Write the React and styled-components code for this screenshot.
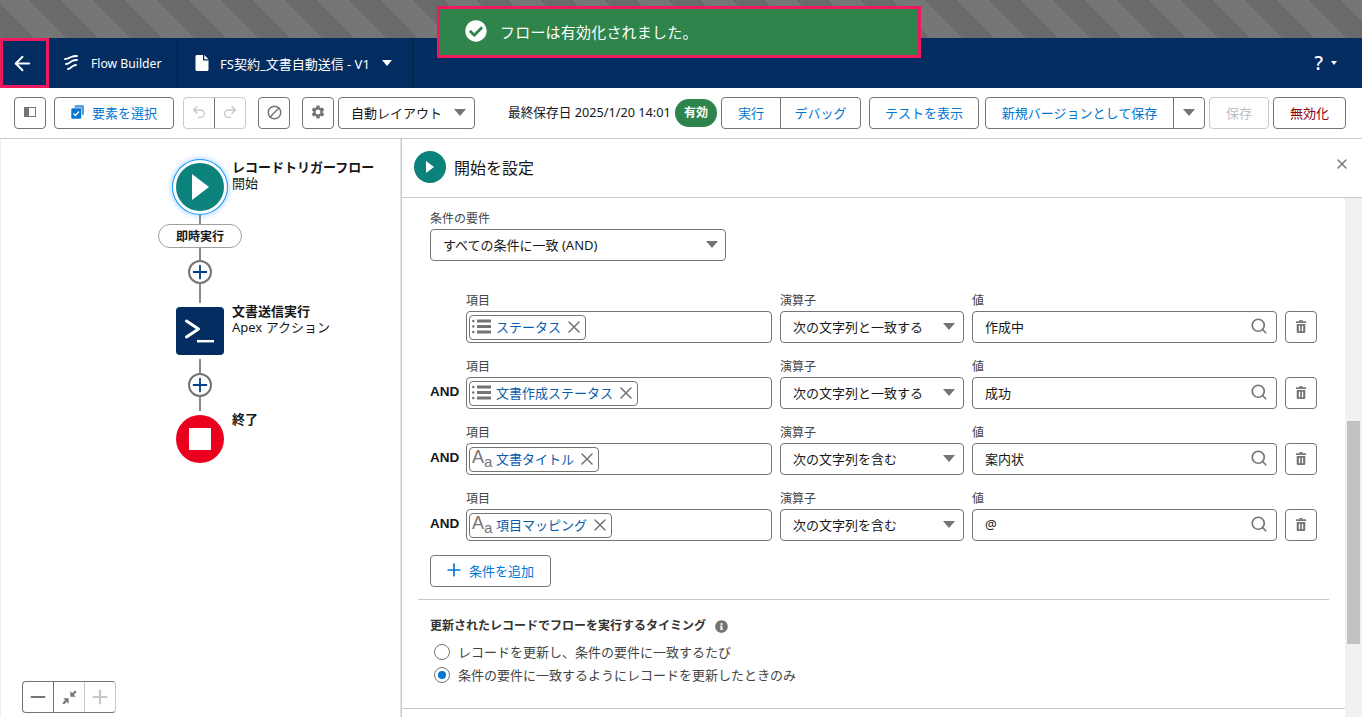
import styled, { createGlobalStyle } from "styled-components";
import { ArrowLeft, Ban, Minus, Plus, Redo2, Search, Undo2, X } from "lucide-react";
import { FaCheckCircle, FaInfoCircle } from "react-icons/fa";
import { MdSettings } from "react-icons/md";

const GlobalStyle = createGlobalStyle`
  html, body {
    margin: 0;
    height: 100%;
    overflow: hidden;
    background: #ffffff;
    font-family: "Noto Sans", "Noto Sans CJK JP", sans-serif;
    font-size: 13px;
    color: #181818;
  }
  * { box-sizing: border-box; }
`;

const Page = styled.div`
  position: relative;
  width: 1362px;
  height: 717px;
  display: flex;
  flex-direction: column;
  overflow: hidden;
`;

const StripeBand = styled.div`
  height: 38px;
  flex: none;
  background: repeating-linear-gradient(45deg, #767676 0 2px, #6a6a6a 2px 24.6px, #767676 24.6px 45.25px);
`;

// ---------------------------------------------------
const Header = styled.header`
  height: 50px;
  flex: none;
  display: flex;
  align-items: stretch;
  background: #032d60;
  color: #ffffff;
`;

const BackCell = styled.div`
  width: 49px;
  display: flex;
  align-items: center;
  justify-content: center;
  padding-right: 4px;
  border: 3px solid #f0195f;
`;

const HeaderCell = styled.div`
  display: flex;
  align-items: center;
  width: ${(p) => p.$width}px;
  padding-left: ${(p) => p.$pad}px;
  border-right: 1px solid #011f44;
  white-space: nowrap;
`;

const HeaderText = styled.span`
  margin-left: ${(p) => p.$gap}px;
  font-size: ${(p) => p.$size}px;
`;

const HelpMenu = styled.div`
  margin-left: auto;
  margin-right: 25px;
  display: flex;
  align-items: center;
  gap: 8px;
  font-size: 19px;
  font-weight: 500;
`;

const SmallCaret = styled.span`
  width: 0;
  height: 0;
  border-left: 3.5px solid transparent;
  border-right: 3.5px solid transparent;
  border-top: 4px solid #ffffff;
`;

const WhiteCaret = styled.span`
  width: 0;
  height: 0;
  margin-left: 12px;
  border-left: 5.5px solid transparent;
  border-right: 5.5px solid transparent;
  border-top: 6px solid #ffffff;
`;

const Toast = styled.div`
  position: absolute;
  left: 437px;
  top: 6px;
  width: 484px;
  height: 52px;
  display: flex;
  align-items: center;
  gap: 13px;
  padding: 0 0 2px 25px;
  background: #2e844a;
  border: 3px solid #f0195f;
  color: #ffffff;
  font-size: 15px;
  letter-spacing: 0.2px;
`;

// ---------------------------------------------------
const Toolbar = styled.div`
  height: 51px;
  flex: none;
  display: flex;
  align-items: flex-start;
  padding: 9px 0 0 14px;
  border-bottom: 1px solid #c9c9c9;
`;

const Button = styled.button`
  height: 32px;
  width: ${(p) => p.$width}px;
  margin-left: ${(p) => p.$gap || 0}px;
  flex: none;
  display: flex;
  align-items: center;
  justify-content: center;
  gap: ${(p) => p.$iconGap || 0}px;
  padding: 0 0 2px;
  background: #ffffff;
  border: 1px solid ${(p) => (p.$disabled ? "#c9c9c9" : "#747474")};
  border-radius: 4px;
  font-family: inherit;
  font-size: 13px;
  color: ${(p) => (p.$danger ? "#8e030f" : p.$disabled ? "#c0c0c0" : "#0176d3")};
`;

const ButtonGroup = styled.div`
  display: flex;
  flex: none;
  height: 32px;
  margin-left: ${(p) => p.$gap || 0}px;
  border: 1px solid ${(p) => (p.$disabled ? "#c9c9c9" : "#747474")};
  border-radius: 4px;
`;

const GroupPart = styled.div`
  width: ${(p) => p.$width}px;
  display: flex;
  align-items: center;
  justify-content: center;
  padding-bottom: 2px;
  color: #0176d3;
  & + & {
    border-left: 1px solid ${(p) => (p.$disabled ? "#c9c9c9" : "#747474")};
  }
`;

const Caret = styled.span`
  flex: none;
  width: 0;
  height: 0;
  border-left: 6px solid transparent;
  border-right: 6px solid transparent;
  border-top: 7px solid #747474;
`;

const SelectBox = styled.div`
  flex: none;
  height: 32px;
  width: ${(p) => p.$width}px;
  margin-left: ${(p) => p.$gap || 0}px;
  display: flex;
  align-items: center;
  justify-content: space-between;
  padding: 0 ${(p) => p.$padRight || 8}px 2px 12px;
  background: #ffffff;
  border: 1px solid #747474;
  border-radius: 4px;
  white-space: nowrap;
`;

const BanIcon = styled(Ban)`
  transform: scaleX(-1);
`;

const SavedText = styled.div`
  margin-left: 33px;
  width: 167px;
  line-height: 31px;
  font-size: 12.7px;
  white-space: nowrap;
`;

const ActiveBadge = styled.div`
  flex: none;
  width: 42px;
  height: 28px;
  margin-top: 2px;
  margin-right: 4px;
  display: flex;
  align-items: center;
  justify-content: center;
  padding-bottom: 2px;
  background: #2e844a;
  border-radius: 14px;
  color: #ffffff;
  font-size: 12px;
  font-weight: 700;
`;

// ---------------------------------------------------
const Workspace = styled.div`
  flex: 1;
  min-height: 0;
  display: flex;
`;

const Canvas = styled.div`
  position: relative;
  width: 401px;
  flex: none;
  display: flex;
  flex-direction: column;
  align-items: center;
  padding: 24px 2px 0 0;
  border-left: 1px solid #f0f0f0;
`;

const Node = styled.div`
  position: relative;
  display: flex;
  flex: none;
  margin-top: ${(p) => p.$gap || 0}px;
`;

const NodeLabel = styled.div`
  position: absolute;
  left: calc(100% + 8px);
  top: -4px;
  line-height: 16px;
  white-space: nowrap;
  strong {
    display: block;
    font-weight: 700;
  }
`;

const StartCircle = styled.div`
  width: ${(p) => p.$size}px;
  height: ${(p) => p.$size}px;
  flex: none;
  display: flex;
  align-items: center;
  justify-content: center;
  background: #0b827c;
  border-radius: 50%;
  box-shadow: ${(p) => (p.$glow ? "0 0 0 3px #ffffff, 0 0 0 4px #1b96ff, 0 0 5px 5px rgba(27,150,255,.35)" : "none")};
`;

const ApexBox = styled.div`
  width: 48px;
  height: 48px;
  display: flex;
  align-items: center;
  justify-content: center;
  background: #032d60;
  border-radius: 4px;
`;

const EndCircle = styled.div`
  width: 48px;
  height: 48px;
  display: flex;
  align-items: center;
  justify-content: center;
  background: #ea001e;
  border-radius: 50%;
`;

const EndSquare = styled.span`
  width: 22px;
  height: 22px;
  background: #ffffff;
`;

const Line = styled.div`
  width: 2px;
  height: ${(p) => p.$height}px;
  margin-top: ${(p) => p.$gap || 0}px;
  flex: none;
  background: #8a8a8a;
`;

const Pill = styled.div`
  width: 84px;
  height: 24px;
  flex: none;
  display: flex;
  align-items: center;
  justify-content: center;
  padding-bottom: 1px;
  background: #ffffff;
  border: 1px solid #a0a0a0;
  border-radius: 12px;
  font-size: 12px;
  font-weight: 700;
`;

const AddCircle = styled.div`
  width: 24px;
  height: 24px;
  flex: none;
  display: flex;
  align-items: center;
  justify-content: center;
  background: #ffffff;
  border: 2px solid #747474;
  border-radius: 50%;
  color: #014486;
  svg {
    flex: none;
  }
`;

const ZoomControls = styled.div`
  position: absolute;
  left: 21px;
  top: 542px;
  display: flex;
  height: 32px;
  width: 94px;
  border: 1px solid #747474;
  border-right-color: #c9c9c9;
  border-radius: 4px;
  background: #ffffff;
`;

const ZoomPart = styled.div`
  flex: 1;
  display: flex;
  align-items: center;
  justify-content: center;
  color: ${(p) => (p.$disabled ? "#c9c9c9" : "#747474")};
  border-left: ${(p) => (p.$first ? "none" : `1px solid ${p.$disabled ? "#c9c9c9" : "#747474"}`)};
`;

// ---------------------------------------------------
const Panel = styled.section`
  flex: 1;
  min-width: 0;
  display: flex;
  flex-direction: column;
  border-left: 1px solid #c9c9c9;
  box-shadow: -1px 0 0 #e5e5e5;
`;

const PanelHeader = styled.div`
  position: relative;
  height: 59px;
  flex: none;
  display: flex;
  align-items: center;
  gap: 8px;
  padding: 0 0 2px 12px;
  border-bottom: 1px solid #c9c9c9;
  font-size: 16px;
`;

const CloseIcon = styled.span`
  position: absolute;
  right: 12px;
  top: 17px;
  display: flex;
  color: #747474;
`;

const PanelScroll = styled.div`
  flex: 1;
  min-height: 0;
  display: flex;
`;

const PanelBody = styled.div`
  flex: 1;
  min-width: 0;
  padding: 13px 16px 0;
`;

const ScrollTrack = styled.div`
  position: relative;
  width: 17px;
  flex: none;
  background: #f1f1f1;
`;

const ScrollThumb = styled.div`
  position: absolute;
  left: 2px;
  right: 2px;
  top: 223px;
  height: 223px;
  background: #c1c1c1;
`;

const Inset = styled.div`
  padding: 0 12px;
`;

const FieldLabel = styled.label`
  display: block;
  height: 18px;
  font-size: 12px;
  line-height: 15px;
  color: #444444;
`;

const ConditionRow = styled.div`
  display: grid;
  grid-template-columns: 28px 306px 184px 305px 32px;
  column-gap: 8px;
  align-items: end;
  margin-top: ${(p) => (p.$first ? 32 : 16)}px;
`;

const AndLabel = styled.div`
  height: 32px;
  line-height: 30px;
  font-size: 13.5px;
  font-weight: 700;
  font-family: "Liberation Sans", sans-serif;
`;

const InputBox = styled.div`
  height: 32px;
  display: flex;
  align-items: center;
  justify-content: space-between;
  padding: 0 8px 2px 12px;
  background: #ffffff;
  border: 1px solid #747474;
  border-radius: 4px;
`;

const PillBox = styled.div`
  height: 32px;
  display: flex;
  align-items: center;
  padding: 0 2px;
  background: #ffffff;
  border: 1px solid #747474;
  border-radius: 4px;
`;

const FieldPill = styled.div`
  height: 25px;
  display: flex;
  align-items: center;
  padding: 0 6px 1px 2px;
  border: 1px solid #747474;
  border-radius: 4px;
  color: #0b5cab;
  white-space: nowrap;
`;

const PillName = styled.span`
  margin: 0 8px 0 5px;
`;

const PillClose = styled(X)`
  flex: none;
  margin: 0 -5px;
  color: #747474;
`;

const TextIcon = styled.span`
  width: 19px;
  display: flex;
  align-items: baseline;
  padding-bottom: 3px;
  font-family: "Liberation Sans", sans-serif;
  color: #747474;
  font-size: 18px;
  line-height: 1;
  small {
    display: inline-block;
    font-size: 15px;
    transform: translateY(4px);
  }
`;

const AddButton = styled(Button)`
  margin-top: 14px;
  justify-content: flex-start;
  padding-left: 13px;
`;

const Divider = styled.div`
  height: 1px;
  margin-top: ${(p) => p.$gap}px;
  background: #c9c9c9;
`;

const BottomRule = styled(Divider)`
  margin-left: -16px;
  margin-right: -16px;
`;

const SectionTitle = styled.div`
  display: flex;
  align-items: center;
  gap: 9px;
  margin-top: 17px;
  line-height: 18px;
  font-size: 12px;
  font-weight: 700;
  color: #333333;
`;

const RadioRow = styled.div`
  display: flex;
  align-items: center;
  gap: 8px;
  height: 23px;
  padding-left: 4px;
  color: #444444;
`;

const RadioDot = styled.span`
  width: 16px;
  height: 16px;
  flex: none;
  display: flex;
  align-items: center;
  justify-content: center;
  border: 1px solid #747474;
  border-radius: 50%;
  &::after {
    content: "";
    display: ${(p) => (p.$checked ? "block" : "none")};
    width: 8px;
    height: 8px;
    border-radius: 50%;
    background: #0176d3;
  }
`;

const RadioGroup = styled.div`
  margin-top: 5px;
`;

// ---------------------------------------------------
const FlowIcon = () => (
  <svg width="16" height="18" viewBox="0 0 16 18" fill="none" stroke="#fff" strokeWidth="1.8" strokeLinecap="round">
    <path d="M2 5c3 0 4-1 6-2s4-1 6-1" />
    <path d="M3 10c3 0 4-2 6-3s3-1 5-1" />
    <path d="M5 15c2 0 3-2 5-3s2-1 3-1" />
  </svg>
);

const DocIcon = () => (
  <svg width="14" height="16" viewBox="0 0 14 16" fill="#fff">
    <path d="M2 0h6v4.500c0 .6.4 1 1 1h4.500V14.500c0 .8-.7 1.500-1.500 1.500H2c-.8 0-1.500-.7-1.500-1.500v-13C.5.700 1.200 0 2 0z" />
    <path d="M9.300 0l4.200 4.200H9.300z" />
  </svg>
);

const PanelToggleIcon = () => (
  <svg width="12" height="10" viewBox="0 0 12 10">
    <rect x=".5" y=".5" width="11" height="9" fill="none" stroke="#747474" />
    <rect x="0" y="0" width="5" height="10" fill="#747474" />
  </svg>
);

const SelectIcon = () => (
  <svg width="13" height="14" viewBox="0 0 13 14">
    <rect x="3.500" y="0" width="9.500" height="10" rx="1.500" fill="#5a9fdc" />
    <rect x="0" y="3" width="10.500" height="11" rx="1.500" fill="#0176d3" stroke="#fff" strokeWidth=".6" />
    <path d="M2.500 8.500l2 2 3.500-4" fill="none" stroke="#fff" strokeWidth="1.300" />
  </svg>
);

const PlayIcon = ({ width, height }) => (
  <svg width={width} height={height} viewBox="0 0 16 24" preserveAspectRatio="none">
    <path d="M0 0v24L16 12z" fill="#fff" />
  </svg>
);

const ApexIcon = () => (
  <svg width="32" height="28" viewBox="0 0 32 28" fill="none" stroke="#fff">
    <path d="M2.500 4l12 8-12 8" strokeWidth="3" strokeLinecap="round" strokeLinejoin="round" />
    <path d="M13 24.200h17" strokeWidth="2.500" />
  </svg>
);

const ListIcon = () => (
  <svg width="19" height="15" viewBox="0 0 19 15" fill="#747474">
    <circle cx="1.300" cy="2" r="1.300" />
    <circle cx="1.300" cy="7.500" r="1.300" />
    <circle cx="1.300" cy="13" r="1.300" />
    <rect x="5" y=".5" width="14" height="3" />
    <rect x="5" y="6" width="14" height="3" />
    <rect x="5" y="11.500" width="14" height="3" />
  </svg>
);

const TrashIcon = () => (
  <svg width="12" height="13" viewBox="0 0 14 15" fill="#747474">
    <path d="M5 0h4v1.500H5z" />
    <rect x="1" y="1.500" width="12" height="2" rx=".5" />
    <path d="M2 4.500h10V14c0 .6-.4 1-1 1H3c-.6 0-1-.4-1-1zM4.500 6.500v6.500h1.500V6.500zM8 6.500v6.500h1.500V6.500z" fillRule="evenodd" />
  </svg>
);

const CollapseIcon = () => (
  <svg width="15" height="15" viewBox="0 0 14 14" fill="#747474">
    <path d="M7.800 6.200h5L11 4.400l2.600-2.600L12.200.4 9.600 3 7.800 1.200zM6.200 7.800h-5L3 9.600.4 12.200l1.400 1.400L4.400 11l1.800 1.800z" />
  </svg>
);

const conditions = [
  { type: "list", name: "ステータス", op: "次の文字列と一致する", value: "作成中" },
  { type: "list", name: "文書作成ステータス", op: "次の文字列と一致する", value: "成功" },
  { type: "text", name: "文書タイトル", op: "次の文字列を含む", value: "案内状" },
  { type: "text", name: "項目マッピング", op: "次の文字列を含む", value: "@" },
];

function ConditionFields({ item, index }) {
  return (
    <ConditionRow $first={index === 0}>
      <AndLabel>{index > 0 && "AND"}</AndLabel>
      <div>
        <FieldLabel>項目</FieldLabel>
        <PillBox>
          <FieldPill>
            {item.type === "list" ? (
              <ListIcon />
            ) : (
              <TextIcon>
                A<small>a</small>
              </TextIcon>
            )}
            <PillName>{item.name}</PillName>
            <PillClose size={20} strokeWidth={1.8} />
          </FieldPill>
        </PillBox>
      </div>
      <div>
        <FieldLabel>演算子</FieldLabel>
        <SelectBox $width={184}>
          {item.op}
          <Caret />
        </SelectBox>
      </div>
      <div>
        <FieldLabel>値</FieldLabel>
        <InputBox>
          {item.value}
          <Search size={18} color="#747474" strokeWidth={2.2} />
        </InputBox>
      </div>
      <Button $width={32}>
        <TrashIcon />
      </Button>
    </ConditionRow>
  );
}

function App() {
  return (
    <Page>
      <GlobalStyle />
      <StripeBand />
      <Header>
        <BackCell>
          <ArrowLeft size={23} strokeWidth={2} />
        </BackCell>
        <HeaderCell $width={129} $pad={14}>
          <FlowIcon />
          <HeaderText $gap={12} $size={12.2}>
            Flow Builder
          </HeaderText>
        </HeaderCell>
        <HeaderCell $width={235} $pad={17}>
          <DocIcon />
          <HeaderText $gap={11} $size={13}>
            FS契約_文書自動送信 - V1
          </HeaderText>
          <WhiteCaret />
        </HeaderCell>
        <HelpMenu>
          ?
          <SmallCaret />
        </HelpMenu>
      </Header>
      <Toast>
        <FaCheckCircle size={22} />
        フローは有効化されました。
      </Toast>

      <Toolbar>
        <Button $width={32}>
          <PanelToggleIcon />
        </Button>
        <Button $width={120} $gap={8} $iconGap={8}>
          <SelectIcon />
          要素を選択
        </Button>
        <ButtonGroup $gap={9} $disabled>
          <GroupPart $width={30} $disabled>
            <Undo2 size={16} color="#c9c9c9" />
          </GroupPart>
          <GroupPart $width={31} $disabled>
            <Redo2 size={16} color="#c9c9c9" />
          </GroupPart>
        </ButtonGroup>
        <Button $width={32} $gap={12}>
          <BanIcon size={15} color="#747474" strokeWidth={2.4} />
        </Button>
        <Button $width={32} $gap={12}>
          <MdSettings size={16} color="#747474" />
        </Button>
        <SelectBox $width={137} $gap={4}>
          自動レイアウト
          <Caret />
        </SelectBox>
        <SavedText>最終保存日 2025/1/20 14:01</SavedText>
        <ActiveBadge>有効</ActiveBadge>
        <ButtonGroup>
          <GroupPart $width={58}>実行</GroupPart>
          <GroupPart $width={80}>デバッグ</GroupPart>
        </ButtonGroup>
        <Button $width={110} $gap={8}>
          テストを表示
        </Button>
        <ButtonGroup $gap={6}>
          <GroupPart $width={187}>新規バージョンとして保存</GroupPart>
          <GroupPart $width={31}>
            <Caret />
          </GroupPart>
        </ButtonGroup>
        <Button $width={60} $gap={4} $disabled>
          保存
        </Button>
        <Button $width={73} $gap={4} $danger>
          無効化
        </Button>
      </Toolbar>

      <Workspace>
        <Canvas>
          <Node>
            <StartCircle $size={48} $glow>
              <PlayIcon width={17} height={26} />
            </StartCircle>
            <NodeLabel>
              <strong>レコードトリガーフロー</strong>
              開始
            </NodeLabel>
          </Node>
          <Line $height={9} $gap={4} />
          <Pill>即時実行</Pill>
          <Line $height={12} />
          <AddCircle>
            <Plus size={22} strokeWidth={2} />
          </AddCircle>
          <Line $height={19} />
          <Node $gap={4}>
            <ApexBox>
              <ApexIcon />
            </ApexBox>
            <NodeLabel>
              <strong>文書送信実行</strong>
              Apex アクション
            </NodeLabel>
          </Node>
          <Line $height={14} $gap={4} />
          <AddCircle>
            <Plus size={22} strokeWidth={2} />
          </AddCircle>
          <Line $height={14} />
          <Node $gap={4}>
            <EndCircle>
              <EndSquare />
            </EndCircle>
            <NodeLabel>
              <strong>終了</strong>
            </NodeLabel>
          </Node>
          <ZoomControls>
            <ZoomPart $first>
              <Minus size={22} strokeWidth={2.4} />
            </ZoomPart>
            <ZoomPart>
              <CollapseIcon />
            </ZoomPart>
            <ZoomPart $disabled>
              <Plus size={22} strokeWidth={2.4} />
            </ZoomPart>
          </ZoomControls>
        </Canvas>

        <Panel>
          <PanelHeader>
            <StartCircle $size={32}>
              <PlayIcon width={8} height={12} />
            </StartCircle>
            開始を設定
            <CloseIcon>
              <X size={16} />
            </CloseIcon>
          </PanelHeader>
          <PanelScroll>
            <PanelBody>
              <Inset>
                <FieldLabel>条件の要件</FieldLabel>
                <SelectBox $width={296} $padRight={7}>
                  すべての条件に一致 (AND)
                  <Caret />
                </SelectBox>
                {conditions.map((item, i) => (
                  <ConditionFields key={item.name} item={item} index={i} />
                ))}
                <AddButton $width={121} $iconGap={5}>
                  <Plus size={20} strokeWidth={2} />
                  条件を追加
                </AddButton>
              </Inset>
              <Divider $gap={12} />
              <Inset>
                <SectionTitle>
                  更新されたレコードでフローを実行するタイミング
                  <FaInfoCircle size={13} color="#747474" />
                </SectionTitle>
                <RadioGroup>
                  <RadioRow>
                    <RadioDot />
                    レコードを更新し、条件の要件に一致するたび
                  </RadioRow>
                  <RadioRow>
                    <RadioDot $checked />
                    条件の要件に一致するようにレコードを更新したときのみ
                  </RadioRow>
                </RadioGroup>
              </Inset>
              <BottomRule $gap={22} />
            </PanelBody>
            <ScrollTrack>
              <ScrollThumb />
            </ScrollTrack>
          </PanelScroll>
        </Panel>
      </Workspace>
    </Page>
  );
}

export default App;
